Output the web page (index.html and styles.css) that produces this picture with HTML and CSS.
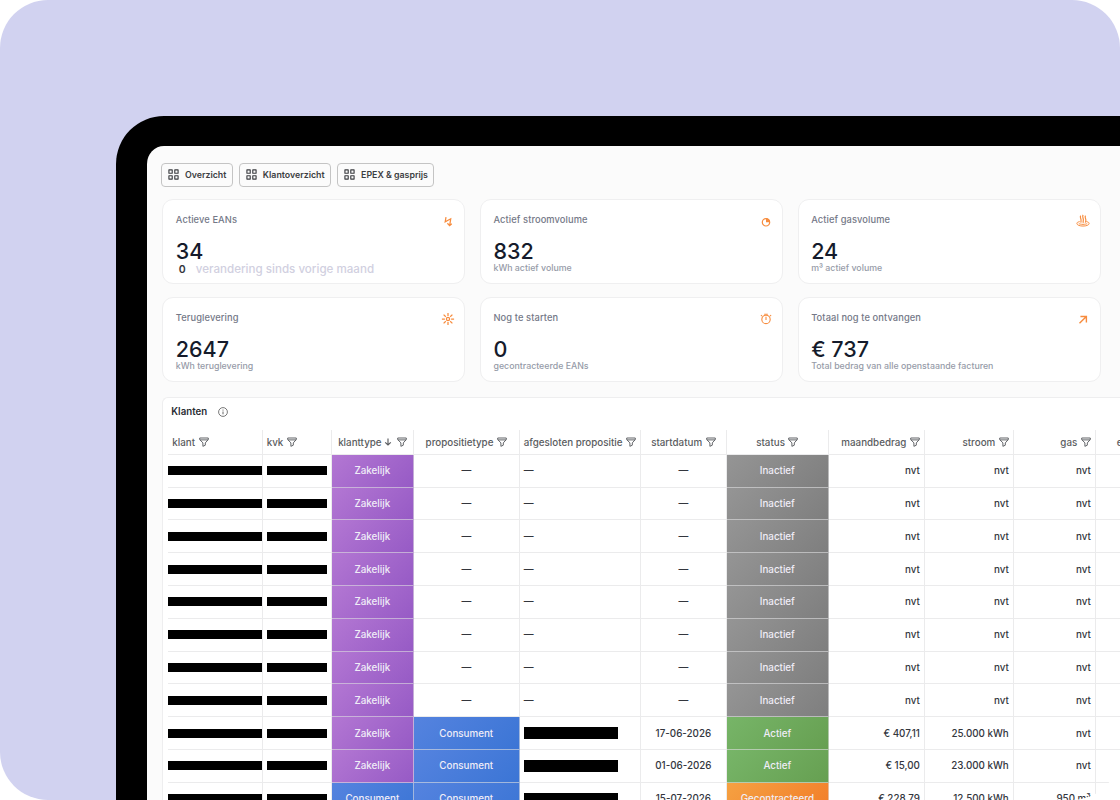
FILE: index.html
```html
<!DOCTYPE html>
<html lang="nl">
<head>
<meta charset="utf-8">
<title>Klantoverzicht</title>
<link rel="stylesheet" href="styles.css">
</head>
<body>
<svg class="defs" width="0" height="0" aria-hidden="true">
  <symbol id="grid" viewBox="0 0 12 12"><path d="M1 1h3.6v3.6H1zM7.4 1H11v3.6H7.4zM1 7.4h3.6V11H1zM7.4 7.4H11V11H7.4z" fill="none" stroke="currentColor" stroke-width="1.25" stroke-linejoin="round"/></symbol>
  <symbol id="filter" viewBox="0 0 10 10"><path d="M.7 1h8.6v1.5L6.3 5.9v2.3L3.9 9.3V5.9L.7 2.5zM.9 2.9h8.2" fill="none" stroke="currentColor" stroke-width=".95" stroke-linejoin="round"/></symbol>
</svg>
<div class="stage">
<div class="device">
<main class="screen">
  <nav class="tabs">
    <a class="tab"><svg><use href="#grid"/></svg><span>Overzicht</span></a>
    <a class="tab"><svg><use href="#grid"/></svg><span>Klantoverzicht</span></a>
    <a class="tab"><svg><use href="#grid"/></svg><span>EPEX &amp; gasprijs</span></a>
  </nav>
  <section class="cards">
    <article class="card"><div class="label">Actieve EANs</div><div class="value">34</div><div class="change"><b>0</b><span>verandering sinds vorige maand</span></div>
      <svg class="icon" viewBox="0 0 14 14"><path d="M5 3.2L4.2 7.9l5.5-3.1-1 6.6M6.4 9.3l2.2 2.3 2.2-1.8" fill="none" stroke="currentColor" stroke-width="1.25"/></svg></article>
    <article class="card"><div class="label">Actief stroomvolume</div><div class="value">832</div><div class="note">kWh actief volume</div>
      <svg class="icon" viewBox="0 0 14 14"><circle cx="7" cy="8.3" r="3.7" fill="none" stroke="currentColor" stroke-width="1.2"/><path d="M7 4.3a4 4 0 0 1 4 4H7z" fill="currentColor"/></svg></article>
    <article class="card"><div class="label">Actief gasvolume</div><div class="value">24</div><div class="note">m³ actief volume</div>
      <svg class="icon" viewBox="0 0 14 14"><path d="M3.7 7.6C1.8 7.9.8 8.6.9 9.5c.1 3.4 12.1 3.4 12.2 0 .1-.9-.9-1.6-2.8-1.9M2.8 9.3c.6 1.4 7.8 1.4 8.4 0" fill="none" stroke="currentColor" stroke-width="1"/><path d="M4.7 1.7c-1.3 2 .9 2.8.3 5.4-.1.7-.1 1 .2 1.5M7.1.9c-1.4 2.2.8 3.3.2 5.6-.2.9-.3 1.6 0 2.4M9.5 1.7c-1.3 2 .9 2.8.3 5.4-.1.7-.4 1-.5 1.5" fill="none" stroke="currentColor" stroke-width="1.2"/></svg></article>
    <article class="card"><div class="label">Teruglevering</div><div class="value">2647</div><div class="note">kWh teruglevering</div>
      <svg class="icon" viewBox="0 0 14 14"><g fill="none" stroke="currentColor" stroke-width="1.25"><circle cx="7" cy="7" r="1.6"/><path d="M7 .9v3M7 10.1v3M.9 7h3M10.1 7h3M2.6 2.6l2.2 2.2M9.2 9.2l2.2 2.2M11.4 2.6L9.2 4.8M4.8 9.2l-2.2 2.2"/></g></svg></article>
    <article class="card"><div class="label">Nog te starten</div><div class="value">0</div><div class="note">gecontracteerde EANs</div>
      <svg class="icon" viewBox="0 0 14 14"><g fill="none" stroke="currentColor" stroke-width="1.1"><circle cx="7" cy="7.4" r="4.2"/><path d="M7 4.7v3.2M5.2 2.3h3.6M3 3l-1.1 1.2M11 3l1.1 1.2"/></g></svg></article>
    <article class="card"><div class="label">Totaal nog te ontvangen</div><div class="value">€ 737</div><div class="note">Total bedrag van alle openstaande facturen</div>
      <svg class="icon" viewBox="0 0 14 14"><path d="M3.5 11.3l6.6-6.6M4.4 4.5h6v6" fill="none" stroke="currentColor" stroke-width="1.4"/></svg></article>
  </section>
  <section class="panel">
    <h2 class="title">Klanten <svg viewBox="0 0 10 10"><circle cx="5" cy="5" r="4.4" fill="none" stroke="currentColor" stroke-width=".8"/><path d="M5 4.5v2.8M5 2.6v1" stroke="currentColor" stroke-width=".9"/></svg></h2>
    <div class="table">
      <div class="row head">
        <div class="cell klant">klant<svg><use href="#filter"/></svg></div>
        <div class="cell">kvk<svg><use href="#filter"/></svg></div>
        <div class="cell mid">klanttype<svg class="down" viewBox="0 0 8 10"><path d="M4 1.5v6.4M1.2 5.3L4 8l2.8-2.7" fill="none" stroke="currentColor" stroke-width="1.15"/></svg><svg><use href="#filter"/></svg></div>
        <div class="cell mid">propositietype<svg><use href="#filter"/></svg></div>
        <div class="cell">afgesloten propositie<svg><use href="#filter"/></svg></div>
        <div class="cell mid">startdatum<svg><use href="#filter"/></svg></div>
        <div class="cell mid">status<svg><use href="#filter"/></svg></div>
        <div class="cell end">maandbedrag<svg><use href="#filter"/></svg></div>
        <div class="cell end">stroom<svg><use href="#filter"/></svg></div>
        <div class="cell end">gas<svg><use href="#filter"/></svg></div>
        <div class="cell last">e</div>
      </div>
      <div class="row"><div class="cell name"><i></i></div><div class="cell"><i></i></div><div class="cell mid purple">Zakelijk</div><div class="cell mid">—</div><div class="cell">—</div><div class="cell mid">—</div><div class="cell mid gray">Inactief</div><div class="cell end">nvt</div><div class="cell end">nvt</div><div class="cell end">nvt</div><div class="cell"></div></div>
      <div class="row"><div class="cell name"><i></i></div><div class="cell"><i></i></div><div class="cell mid purple">Zakelijk</div><div class="cell mid">—</div><div class="cell">—</div><div class="cell mid">—</div><div class="cell mid gray">Inactief</div><div class="cell end">nvt</div><div class="cell end">nvt</div><div class="cell end">nvt</div><div class="cell"></div></div>
      <div class="row"><div class="cell name"><i></i></div><div class="cell"><i></i></div><div class="cell mid purple">Zakelijk</div><div class="cell mid">—</div><div class="cell">—</div><div class="cell mid">—</div><div class="cell mid gray">Inactief</div><div class="cell end">nvt</div><div class="cell end">nvt</div><div class="cell end">nvt</div><div class="cell"></div></div>
      <div class="row"><div class="cell name"><i></i></div><div class="cell"><i></i></div><div class="cell mid purple">Zakelijk</div><div class="cell mid">—</div><div class="cell">—</div><div class="cell mid">—</div><div class="cell mid gray">Inactief</div><div class="cell end">nvt</div><div class="cell end">nvt</div><div class="cell end">nvt</div><div class="cell"></div></div>
      <div class="row"><div class="cell name"><i></i></div><div class="cell"><i></i></div><div class="cell mid purple">Zakelijk</div><div class="cell mid">—</div><div class="cell">—</div><div class="cell mid">—</div><div class="cell mid gray">Inactief</div><div class="cell end">nvt</div><div class="cell end">nvt</div><div class="cell end">nvt</div><div class="cell"></div></div>
      <div class="row"><div class="cell name"><i></i></div><div class="cell"><i></i></div><div class="cell mid purple">Zakelijk</div><div class="cell mid">—</div><div class="cell">—</div><div class="cell mid">—</div><div class="cell mid gray">Inactief</div><div class="cell end">nvt</div><div class="cell end">nvt</div><div class="cell end">nvt</div><div class="cell"></div></div>
      <div class="row"><div class="cell name"><i></i></div><div class="cell"><i></i></div><div class="cell mid purple">Zakelijk</div><div class="cell mid">—</div><div class="cell">—</div><div class="cell mid">—</div><div class="cell mid gray">Inactief</div><div class="cell end">nvt</div><div class="cell end">nvt</div><div class="cell end">nvt</div><div class="cell"></div></div>
      <div class="row"><div class="cell name"><i></i></div><div class="cell"><i></i></div><div class="cell mid purple">Zakelijk</div><div class="cell mid">—</div><div class="cell">—</div><div class="cell mid">—</div><div class="cell mid gray">Inactief</div><div class="cell end">nvt</div><div class="cell end">nvt</div><div class="cell end">nvt</div><div class="cell"></div></div>
      <div class="row"><div class="cell name"><i></i></div><div class="cell"><i></i></div><div class="cell mid purple">Zakelijk</div><div class="cell mid blue">Consument</div><div class="cell prop"><i></i></div><div class="cell mid">17-06-2026</div><div class="cell mid green">Actief</div><div class="cell end">€ 407,11</div><div class="cell end">25.000 kWh</div><div class="cell end">nvt</div><div class="cell"></div></div>
      <div class="row"><div class="cell name"><i></i></div><div class="cell"><i></i></div><div class="cell mid purple">Zakelijk</div><div class="cell mid blue">Consument</div><div class="cell prop"><i></i></div><div class="cell mid">01-06-2026</div><div class="cell mid green">Actief</div><div class="cell end">€ 15,00</div><div class="cell end">23.000 kWh</div><div class="cell end">nvt</div><div class="cell"></div></div>
      <div class="row"><div class="cell name"><i></i></div><div class="cell"><i></i></div><div class="cell mid blue">Consument</div><div class="cell mid blue">Consument</div><div class="cell prop"><i></i></div><div class="cell mid">15-07-2026</div><div class="cell mid orange">Gecontracteerd</div><div class="cell end">€ 228,79</div><div class="cell end">12.500 kWh</div><div class="cell end">950 m³</div><div class="cell"></div></div>
    </div>
  </section>
</main>
</div>
</div>
</body>
</html>
```
FILE: styles.css
```css
* { box-sizing: border-box; }
html { background: #fff; }
body { margin: 0; width: 1120px; height: 800px; overflow: hidden; font-family: Inter, "Liberation Sans", sans-serif; color: #33363d; }
.defs { position: absolute; }
.stage { width: 1120px; height: 800px; padding: 116px 0 0 116px; border-radius: 48px; overflow: hidden; background: linear-gradient(#d1d2f0, #d1d2f0) 0 0 / 100% 170px no-repeat, linear-gradient(#d1d2f0, #d1d2f0) 0 0 / 170px 100% no-repeat; }
.device { height: 684px; border: solid #000; border-width: 30px 0 0 31px; border-radius: 48px 0 0 0; overflow: hidden; background: linear-gradient(#fbfbfb, #fbfbfb) 0 0 / 100% 280px no-repeat, linear-gradient(#fbfbfb, #fbfbfb) 0 0 / 20px 100% no-repeat; }
.screen { height: 654px; padding: 17px 0 0 14px; }

.tabs { display: flex; gap: 6px; height: 24px; }
.tab { display: flex; align-items: center; gap: 6px; height: 24px; padding: 0 5.5px 1px 6px; border: 1px solid #c4c4c4; border-radius: 4px; font-size: 8.8px; font-weight: 600; color: #3c3e42; white-space: nowrap; }
.tab svg { width: 11px; height: 11px; }

.cards { display: grid; grid-template-columns: repeat(3, 303px); grid-template-rows: 85px 85px; gap: 13.3px 14.7px; margin: 11.7px 0 0 1.3px; }
.card { position: relative; padding: 13.5px 12.5px 0; border: 1px solid #efeff0; border-radius: 11px; background: #fff; white-space: nowrap; }
.label { height: 13px; line-height: 13px; font-size: 9.3px; font-weight: 500; letter-spacing: .1px; color: #747887; }
.value { height: 27px; margin-top: 11.5px; line-height: 27px; font-size: 21.5px; font-weight: 450; color: #151b2b; }
.note { margin-top: -2.5px; line-height: 12px; font-size: 8.8px; font-weight: 500; color: #969ba8; }
.change { display: flex; gap: 10px; margin: -1.5px 0 0 3px; line-height: 13px; font-size: 11.6px; font-weight: 500; color: #d1d0df; }
.change b { font-size: 10.5px; font-weight: 600; color: #33363d; }
.icon { position: absolute; top: 14.4px; right: 9.4px; width: 14px; height: 14px; color: #f78c3e; }

.panel { height: 420px; margin: 15.3px 0 0 1.3px; padding-left: 5px; border: solid #eeeeef; border-width: 1px 0 0 1px; border-radius: 6px 0 0 0; background: #fff; }
.title { display: flex; align-items: center; gap: 11px; height: 32px; margin: 0; padding: 0 0 5px 3px; font-size: 9.7px; font-weight: 600; color: #292c33; }
.title svg { width: 10px; height: 10px; color: #555; }

.table { font-size: 9.8px; font-weight: 500; }
.row { display: grid; grid-template-columns: 94.4px 69.2px 82px 105.8px 121.5px 85.4px 102.5px 95.8px 88.9px 82px 90px; height: 32.8px; }
.head { height: 24.5px; color: #5a5c60; }
.cell { display: flex; align-items: center; padding: 0 4px; border: solid rgba(222, 222, 225, .62); border-width: 0 1px 1px 0; background-origin: border-box; white-space: nowrap; overflow: hidden; }
.head svg { flex: none; width: 10px; height: 10px; margin-left: 3.5px; }
.head .down { width: 8px; margin-left: 2px; }
.head .down + svg { margin-left: 5px; }
.mid { justify-content: center; }
.end { justify-content: flex-end; }
.head .last { padding-left: 21px; }
.row .name { padding: 0; }
.cell i { width: 60px; height: 9px; background: #000; }
.name i { width: 94px; }
.prop i { width: 94px; height: 12px; }
.purple, .blue, .gray, .green, .orange { color: #f0edf7; }
.purple { background-image: linear-gradient(135deg, #b377d3, #965ac5); }
.blue { background-image: linear-gradient(135deg, #5583df, #3b75d5); }
.gray { background-image: linear-gradient(135deg, #959595, #7e7e7e); }
.green { background-image: linear-gradient(135deg, #77b568, #669f51); }
.orange { background-image: linear-gradient(135deg, #f5a142, #f27c28); }
```
